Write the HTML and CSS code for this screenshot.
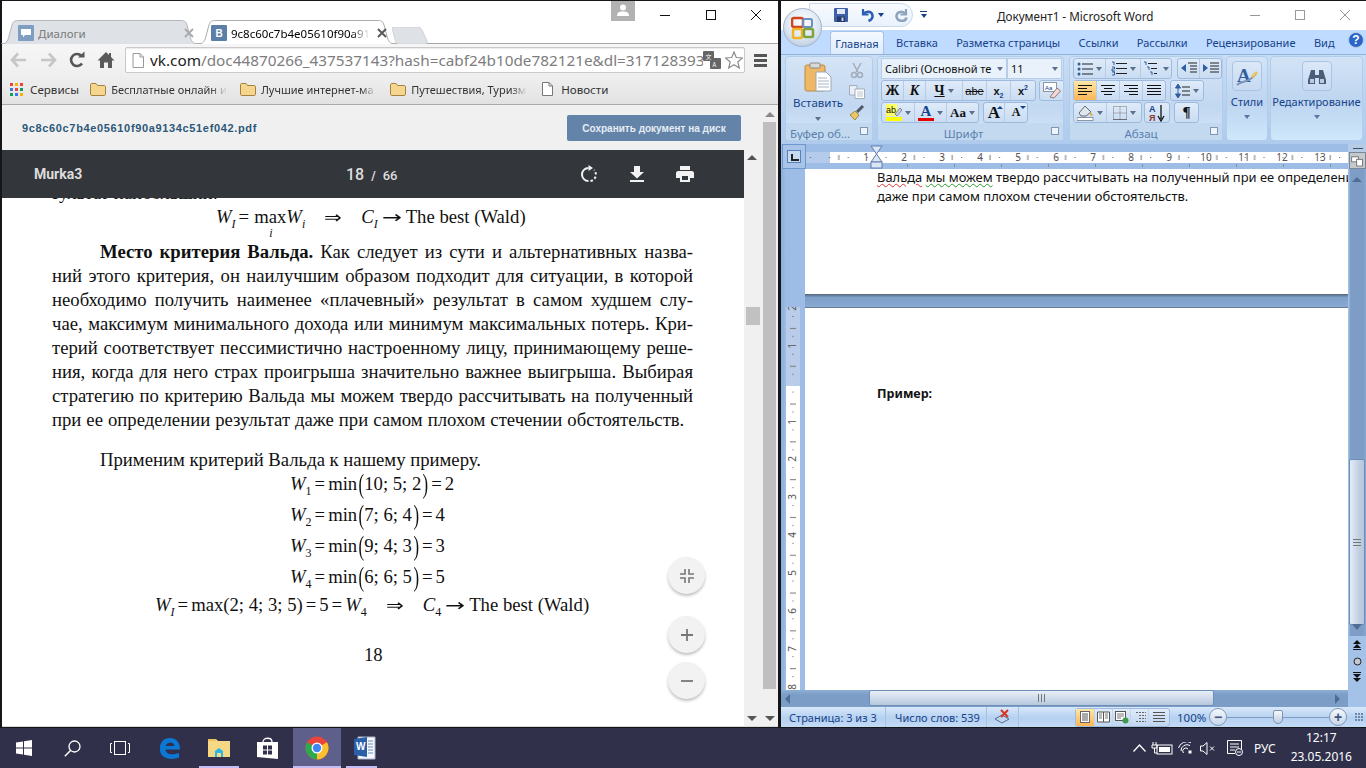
FILE: index.html
```html
<!DOCTYPE html>
<html lang="ru">
<head>
<meta charset="utf-8">
<title>Рабочий стол</title>
<link rel="stylesheet" href="styles.css">
</head>
<body>
<div class="desktop">
<div class="windows">

<section class="chrome">
  <div class="titlebar">
    <div class="tabs">
      <div class="tab tab-bg">
        <svg class="tabshape" viewBox="0 0 197 24" preserveAspectRatio="none"><path d="M0 24C5 24 7 21 8 16L11 5C12 1 14 .5 18 .5H179C183 .5 185 1 186 5L189 16C190 21 192 24 197 24" fill="#dee1e6" stroke="#b4b6ba"/></svg>
        <span class="fav fav-a"><svg width="10" height="10" viewBox="0 0 10 10"><path d="M0 1H10V7H4L2 9.500V7H0Z" fill="#fff"/></svg></span>
        <span class="tabtitle muted">Диалоги</span>
        <svg class="tabx" width="10" height="10" viewBox="0 0 10 10"><path d="M1 1L9 9M9 1L1 9" stroke="#a9abae" stroke-width="2"/></svg>
      </div>
      <div class="tab tab-on">
        <svg class="tabshape" viewBox="0 0 197 24" preserveAspectRatio="none"><path d="M0 24C5 24 7 21 8 16L11 5C12 1 14 .5 18 .5H179C183 .5 185 1 186 5L189 16C190 21 192 24 197 24" fill="#fff" stroke="#a9abae"/></svg>
        <span class="fav fav-b">B</span>
        <span class="tabtitle fade">9c8c60c7b4e05610f90a9134c51ef042.pdf</span>
        <svg class="tabx" width="10" height="10" viewBox="0 0 10 10"><path d="M1 1L9 9M9 1L1 9" stroke="#5a5a5a" stroke-width="2"/></svg>
      </div>
      <svg class="newtab" width="37" height="17" viewBox="0 0 37 17"><path d="M1 0H25C28 0 29 1 30 3L35 14C35.500 16 35 17 33 17H7C5 17 4 16 3.500 14L0 1Z" fill="#dee1e6" stroke="#d0d2d6"/></svg>
    </div>
    <div class="avatar"><svg width="12" height="12" viewBox="0 0 12 12"><circle cx="6" cy="3.500" r="3" fill="#fff"/><path d="M0 12C0 8 3 7.500 6 7.500S12 8 12 12Z" fill="#fff"/></svg></div>
    <div class="winbtns">
      <svg width="45" height="20" viewBox="0 0 45 20"><path d="M17 14.500H27" stroke="#111"/></svg>
      <svg width="45" height="20" viewBox="0 0 45 20"><rect x="18.500" y="9.500" width="9" height="9" fill="none" stroke="#111"/></svg>
      <svg width="45" height="20" viewBox="0 0 45 20"><path d="M18 9L28 19M28 9L18 19" stroke="#111"/></svg>
    </div>
  </div>

  <div class="toolbar">
    <svg class="nav" width="18" height="16" viewBox="0 0 18 16"><path d="M8 1.500L2 8L8 14.500M2 8H16" fill="none" stroke="#c6c6c6" stroke-width="2.600"/></svg>
    <svg class="nav" width="18" height="16" viewBox="0 0 18 16"><path d="M10 1.500L16 8L10 14.500M16 8H2" fill="none" stroke="#c6c6c6" stroke-width="2.600"/></svg>
    <svg class="nav" width="18" height="18" viewBox="0 0 18 18"><path d="M14 12.500A6 6 0 1 1 13.500 5" fill="none" stroke="#555" stroke-width="2.600"/><path d="M10 6.500H16.500V0.500Z" fill="#555"/></svg>
    <svg class="nav" width="18" height="18" viewBox="0 0 18 18"><path d="M9 1L0.500 9.500H3V17H7V11.500H11V17H15V9.500H17.500L14 6V2H12V4Z" fill="#5a5a5a"/></svg>
    <div class="urlbar">
      <svg width="12" height="15" viewBox="0 0 12 15"><path d="M1 .5H8L11.500 4V14.500H1Z" fill="#fff" stroke="#9a9a9a"/><path d="M8 .5V4H11.500" fill="none" stroke="#9a9a9a"/></svg>
      <span class="url"><b>vk.com</b>/doc44870266_437537143?hash=cabf24b10de782121e&amp;dl=317128393</span>
      <svg width="18" height="18" viewBox="0 0 18 18"><rect x="0" y="0" width="11" height="10" rx="1" fill="#666"/><rect x="7" y="7" width="11" height="11" rx="1" fill="#666"/><text x="2.500" y="8" class="tr">文</text><text x="9.500" y="16" class="tr">A</text></svg>
      <svg width="18" height="18" viewBox="0 0 18 18"><path d="M9 1L11.300 6.500L17.500 7L12.800 11L14.300 17L9 13.800L3.700 17L5.200 11L.5 7L6.700 6.500Z" fill="#fff" stroke="#8a8a8a" stroke-width="1.200"/></svg>
    </div>
    <div class="burger"><i></i><i></i><i></i></div>
  </div>

  <nav class="bookmarks">
    <span class="bm"><svg width="13" height="13" viewBox="0 0 13 13"><g><rect width="3" height="3" fill="#e8453c"/><rect x="5" width="3" height="3" fill="#f4b400"/><rect x="10" width="3" height="3" fill="#e8453c"/><rect y="5" width="3" height="3" fill="#3b78e7"/><rect x="5" y="5" width="3" height="3" fill="#e8453c"/><rect x="10" y="5" width="3" height="3" fill="#0f9d58"/><rect y="10" width="3" height="3" fill="#0f9d58"/><rect x="5" y="10" width="3" height="3" fill="#3b78e7"/><rect x="10" y="10" width="3" height="3" fill="#f4b400"/></g></svg>Сервисы</span>
    <span class="bm folder"><svg width="16" height="13" viewBox="0 0 16 13"><path d="M.5 2C.5 1 1 .5 2 .5H6L7.500 2.500H14C15 2.500 15.500 3 15.500 4V11C15.500 12 15 12.500 14 12.500H2C1 12.500 .5 12 .5 11Z" fill="#f6d58e" stroke="#a5813f"/></svg><span class="fade bmt">Бесплатные онлайн и</span></span>
    <span class="bm folder"><svg width="16" height="13" viewBox="0 0 16 13"><path d="M.5 2C.5 1 1 .5 2 .5H6L7.500 2.500H14C15 2.500 15.500 3 15.500 4V11C15.500 12 15 12.500 14 12.500H2C1 12.500 .5 12 .5 11Z" fill="#f6d58e" stroke="#a5813f"/></svg><span class="fade bmt">Лучшие интернет-ма</span></span>
    <span class="bm folder"><svg width="16" height="13" viewBox="0 0 16 13"><path d="M.5 2C.5 1 1 .5 2 .5H6L7.500 2.500H14C15 2.500 15.500 3 15.500 4V11C15.500 12 15 12.500 14 12.500H2C1 12.500 .5 12 .5 11Z" fill="#f6d58e" stroke="#a5813f"/></svg><span class="fade bmt">Путешествия, Туризм</span></span>
    <span class="bm doc"><svg width="11" height="14" viewBox="0 0 11 14"><path d="M.5 .5H7L10.500 4V13.500H.5Z" fill="#fff" stroke="#777"/><path d="M7 .5V4H10.500" fill="none" stroke="#777"/></svg>Новости</span>
  </nav>

  <div class="content">
    <div class="viewer">
      <header class="vkhead">
        <span class="fname">9c8c60c7b4e05610f90a9134c51ef042.pdf</span>
        <button class="save">Сохранить документ на диск</button>
      </header>
      <div class="pdfarea">
        <div class="pdfbar">
          <span class="owner">Murka3</span>
          <span class="pages"><b class="cur">18</b><i>/</i><b class="tot">66</b></span>
          <span class="pdficons">
            <svg width="18" height="18" viewBox="0 0 18 18"><path d="M8.500 3A6.500 6.500 0 0 0 8.500 16" fill="none" stroke="#f2f2f2" stroke-width="2"/><path d="M10.500 16A6.500 6.500 0 0 0 14 5" fill="none" stroke="#f2f2f2" stroke-width="2" stroke-dasharray="2.500 2"/><path d="M8.500 0L13 3L8.500 6Z" fill="#f2f2f2"/></svg>
            <svg width="14" height="16" viewBox="0 0 14 16"><path d="M4 0H10V6H14L7 12.500L0 6H4Z" fill="#f2f2f2"/><rect y="14" width="14" height="2" fill="#f2f2f2"/></svg>
            <svg width="18" height="16" viewBox="0 0 18 16"><path d="M4 0H14V4H4ZM2 5H16C17 5 18 6 18 7V12H14V16H4V12H0V7C0 6 1 5 2 5ZM6 10V14H12V10Z" fill="#f2f2f2" fill-rule="evenodd"/></svg>
          </span>
        </div>
        <article class="page">
          <p class="ln end">зультат наибольший:</p>
          <p class="fm f0"><i>W<sub>I</sub></i><span class="eq">=</span><span class="maxi">max<small>i</small></span><i>W<sub>i</sub></i><span class="sp">⇒</span><i>C<sub>I</sub></i><span class="arr">→</span>The best (Wald)</p>
          <p class="ln first"><b>Место критерия Вальда.</b> Как следует из сути и альтернативных назва-</p>
          <p class="ln">ний этого критерия, он наилучшим образом подходит для ситуации, в которой</p>
          <p class="ln">необходимо получить наименее «плачевный» результат в самом худшем слу-</p>
          <p class="ln">чае, максимум минимального дохода или минимум максимальных потерь. Кри-</p>
          <p class="ln">терий соответствует пессимистично настроенному лицу, принимающему реше-</p>
          <p class="ln">ния, когда для него страх проигрыша значительно важнее выигрыша. Выбирая</p>
          <p class="ln">стратегию по критерию Вальда мы можем твердо рассчитывать на полученный</p>
          <p class="ln end wide">при ее определении результат даже при самом плохом стечении обстоятельств.</p>
          <p class="ln end first lead">Применим критерий Вальда к нашему примеру.</p>
          <p class="fm fw"><i>W</i><sub>1</sub><span class="eq">=</span>min<span class="par">(</span>10; 5; 2<span class="par">)</span><span class="eq">=</span>2</p>
          <p class="fm fw"><i>W</i><sub>2</sub><span class="eq">=</span>min<span class="par">(</span>7; 6; 4<span class="par">)</span><span class="eq">=</span>4</p>
          <p class="fm fw"><i>W</i><sub>3</sub><span class="eq">=</span>min<span class="par">(</span>9; 4; 3<span class="par">)</span><span class="eq">=</span>3</p>
          <p class="fm fw"><i>W</i><sub>4</sub><span class="eq">=</span>min<span class="par">(</span>6; 6; 5<span class="par">)</span><span class="eq">=</span>5</p>
          <p class="fm flast"><i>W<sub>I</sub></i><span class="eq">=</span>max(2; 4; 3; 5)<span class="eq">=</span>5<span class="eq">=</span><i>W</i><sub>4</sub><span class="sp">⇒</span><i>C</i><sub>4</sub><span class="arr">→</span>The best (Wald)</p>
          <p class="pnum">18</p>
        </article>
        <div class="fabs">
          <button class="fab collapse"><svg width="14" height="14" viewBox="0 0 14 14"><path d="M5 0V5H0M9 0V5H14M5 14V9H0M9 14V9H14" fill="none" stroke="#777" stroke-width="1.600"/></svg></button>
          <button class="fab plus"><svg width="14" height="14" viewBox="0 0 14 14"><path d="M7 1V13M1 7H13" stroke="#777" stroke-width="1.800"/></svg></button>
          <button class="fab minus"><svg width="14" height="14" viewBox="0 0 14 14"><path d="M1 7H13" stroke="#777" stroke-width="1.800"/></svg></button>
        </div>
      </div>
    </div>
    <div class="scroll inner"><span class="up"></span><span class="thumb"></span><span class="dn"></span></div>
    <div class="scroll outer"><span class="up"></span><span class="thumb"></span><span class="dn"></span></div>
  </div>
</section>

<section class="word">
  <div class="wtitle">
    <div class="officebtn"><svg width="24" height="24" viewBox="0 0 24 24"><rect x="1" y="2" width="11" height="9" rx="2" fill="none" stroke="#d2451e" stroke-width="2.500"/><rect x="12" y="3" width="9" height="8" rx="1.500" fill="none" stroke="#6a8fc0" stroke-width="2"/><rect x="2" y="13" width="9" height="9" rx="1.500" fill="none" stroke="#f0b323" stroke-width="2.500"/><rect x="13" y="13" width="9" height="8" rx="1.500" fill="none" stroke="#7ea33c" stroke-width="2.500"/></svg></div>
    <div class="qat">
      <svg width="14" height="14" viewBox="0 0 14 14"><rect width="14" height="14" rx="1" fill="#3f5fa8"/><rect x="3" y="1" width="8" height="5" fill="#dfe8f6"/><rect x="3" y="8.500" width="8" height="5.500" fill="#26386c"/><rect x="7.500" y="9.500" width="2" height="3.500" fill="#c8d4ea"/></svg>
      <svg class="undo" width="14" height="14" viewBox="0 0 14 14"><path d="M3 1V6.500H8.500" fill="none" stroke="#2a5fb5" stroke-width="2.200"/><path d="M3.500 6C6 2.500 12 3 12.500 7.500C12.800 10 11 12 8.500 13" fill="none" stroke="#2a5fb5" stroke-width="2.500"/></svg>
      <span class="drop blue"></span>
      <svg class="redo" width="14" height="14" viewBox="0 0 14 14"><path d="M11 1V6.500H5.500" fill="none" stroke="#8ea4bc" stroke-width="2.200"/><path d="M10.500 6C8 2.500 2 3.500 1.500 7.500C1.200 10 3 13 7 13C9 13 11 12 11.500 9.500" fill="none" stroke="#8ea4bc" stroke-width="2.500"/></svg>
    </div>
    <span class="qatdrop"><i></i><span class="drop blue"></span></span>
    <span class="doctitle">Документ1 - Microsoft Word</span>
    <div class="wbtns">
      <svg width="45" height="20" viewBox="0 0 45 20"><path d="M20 15.500H30" stroke="#999"/></svg>
      <svg width="45" height="20" viewBox="0 0 45 20"><rect x="20.500" y="10.500" width="9" height="9" fill="none" stroke="#999"/></svg>
      <svg width="45" height="20" viewBox="0 0 45 20"><path d="M20 10L30 20M30 10L20 20" stroke="#999"/></svg>
    </div>
  </div>

  <div class="wtabs">
    <span class="wtab on">Главная</span>
    <span class="wtab">Вставка</span>
    <span class="wtab">Разметка страницы</span>
    <span class="wtab">Ссылки</span>
    <span class="wtab">Рассылки</span>
    <span class="wtab">Рецензирование</span>
    <span class="wtab">Вид</span>
    <span class="help">?</span>
  </div>

  <div class="ribbon">
    <div class="group g-clip">
      <div class="gbody clipbody">
        <div class="paste">
          <svg width="28" height="30" viewBox="0 0 28 30"><rect x="1" y="3" width="20" height="26" rx="2" fill="#eeb866" stroke="#b98a45"/><rect x="6" y="1" width="10" height="5" rx="1" fill="#d9d9d9" stroke="#8a8a8a"/><path d="M12 10H22L27 15V29H12Z" fill="#fff" stroke="#9aa8b8"/><path d="M14 16H23M14 19H25M14 22H25M14 25H25" stroke="#a8b4c4"/></svg>
          <span>Вставить</span><span class="drop"></span>
        </div>
        <div class="clipside">
          <svg width="16" height="16" viewBox="0 0 16 16"><path d="M4 0L9 9M12 0L7 9" stroke="#a3adba" stroke-width="1.500"/><circle cx="5" cy="12" r="2.500" fill="none" stroke="#a3adba" stroke-width="1.500"/><circle cx="11" cy="12" r="2.500" fill="none" stroke="#a3adba" stroke-width="1.500"/></svg>
          <svg width="16" height="14" viewBox="0 0 16 14"><path d="M.5 .5H8V10H.5Z" fill="#eaf0f8" stroke="#a3adba"/><path d="M6 4H15.500V13.500H6Z" fill="#fff" stroke="#a3adba"/><path d="M8 7H14M8 9H14M8 11H14" stroke="#b8c2ce"/></svg>
          <svg width="16" height="16" viewBox="0 0 16 16"><path d="M1 10L6 6L10 10L6 15Z" fill="#eac668" stroke="#a68a3c"/><path d="M8 7L14 1" stroke="#4f5866" stroke-width="3"/></svg>
        </div>
      </div>
      <div class="glabel gl-clip">Буфер об...<span class="launch"></span></div>
    </div>

    <div class="group g-font">
      <div class="gbody rows">
        <div class="rw">
          <span class="field ffam">Calibri (Основной те<span class="drop"></span></span>
          <span class="field fsize">11<span class="drop"></span></span>
        </div>
        <div class="rw">
          <span class="bgroup">
            <span class="rb w22 serif"><b>Ж</b></span><span class="rb w22 serif"><b><i>К</i></b></span><span class="rb w37 serif"><b class="ul">Ч</b><span class="drop"></span></span><span class="rb w24 sm"><s>abe</s></span><span class="rb w24 sm"><b>x<sub>2</sub></b></span><span class="rb w24 sm"><b>x<sup>2</sup></b></span>
          </span>
          <span class="bgroup ml3"><span class="rb w24"><svg width="18" height="17" viewBox="0 0 18 17"><rect x=".5" y=".5" width="13" height="9" fill="#fff" stroke="#8a96a5"/><text x="2" y="8" class="aa">Aa</text><path d="M7 15L14 6L17.500 9L11 16Z" fill="#f4d8d8" stroke="#8a7a7a"/></svg></span></span>
        </div>
        <div class="rw">
          <span class="bgroup">
            <span class="rb w33"><svg width="16" height="17" viewBox="0 0 16 17"><rect y="13" width="16" height="4" fill="#ffff00"/><rect width="11" height="12" fill="#ffff60"/><text x="0" y="9" class="hl">ab</text><path d="M9 10L14 4L16 6L11 12Z" fill="#c9d3df" stroke="#7a8694"/></svg><span class="drop"></span></span><span class="rb w32"><span class="fcolor">A</span><span class="drop"></span></span><span class="rb w31 serif"><b class="s13">Aa</b><span class="drop"></span></span>
          </span>
          <span class="bgroup ml4">
            <span class="rb w21 serif"><b class="s16">A</b><i class="tri-up"></i></span><span class="rb w22 serif"><b class="s12">A</b><i class="tri-dn"></i></span>
          </span>
        </div>
      </div>
      <div class="glabel gl-font">Шрифт<span class="launch"></span></div>
    </div>

    <div class="group g-par">
      <div class="gbody rows">
        <div class="rw">
          <span class="bgroup">
            <span class="rb w32"><svg width="16" height="14" viewBox="0 0 16 14"><path d="M5 2H16M5 7H16M5 12H16" stroke="#222" stroke-width="1.200"/><circle cx="2" cy="2" r="1.500" fill="#2f5f9f"/><circle cx="2" cy="7" r="1.500" fill="#2f5f9f"/><circle cx="2" cy="12" r="1.500" fill="#2f5f9f"/></svg><span class="drop"></span></span><span class="rb w35"><svg width="16" height="15" viewBox="0 0 16 15"><path d="M5 2.500H16M5 7.500H16M5 12.500H16" stroke="#222" stroke-width="1.200"/><path d="M1 1H3V4M1 6H3.500V8H1V10H4M1 11H3.500V14H1" fill="none" stroke="#2f5f9f"/></svg><span class="drop"></span></span><span class="rb w30"><svg width="17" height="15" viewBox="0 0 17 15"><path d="M5 2.500H14M8 7.500H14M11 12.500H14" stroke="#222" stroke-width="1.200"/><path d="M1 1H3V4M4 6H6V9M7 11H9V14" fill="none" stroke="#2f5f9f"/></svg><span class="drop"></span></span>
          </span>
          <span class="bgroup ml5">
            <span class="rb w22"><svg width="16" height="13" viewBox="0 0 16 13"><path d="M7 1H16M9 4H16M9 7H16M9 10H16" stroke="#222" stroke-width="1.200"/><path d="M0 6L5 2V10Z" fill="#2f5f9f"/></svg></span><span class="rb w21"><svg width="16" height="13" viewBox="0 0 16 13"><path d="M7 1H16M7 4H16M7 7H16M7 10H16" stroke="#222" stroke-width="1.200"/><path d="M5 6L0 2V10Z" fill="#2f5f9f"/></svg></span>
          </span>
        </div>
        <div class="rw">
          <span class="bgroup">
            <span class="rb w23 active"><svg width="14" height="11" viewBox="0 0 14 11"><path d="M0 .5H14M0 3.500H9M0 6.500H14M0 9.500H9" stroke="#111"/></svg></span><span class="rb w23"><svg width="14" height="11" viewBox="0 0 14 11"><path d="M0 .5H14M3 3.500H11M0 6.500H14M3 9.500H11" stroke="#111"/></svg></span><span class="rb w23"><svg width="14" height="11" viewBox="0 0 14 11"><path d="M0 .5H14M5 3.500H14M0 6.500H14M5 9.500H14" stroke="#111"/></svg></span><span class="rb w22"><svg width="14" height="11" viewBox="0 0 14 11"><path d="M0 .5H14M0 3.500H14M0 6.500H14M0 9.500H14" stroke="#111"/></svg></span>
          </span>
          <span class="bgroup ml4"><span class="rb w32"><svg width="15" height="16" viewBox="0 0 15 16"><path d="M3 1L.5 5H5.500ZM3 15L.5 11H5.500ZM3 4V12" fill="#2f5f9f" stroke="#2f5f9f"/><path d="M7 4H15M7 8H15M7 12H15" stroke="#222" stroke-width="1.200"/></svg><span class="drop"></span></span></span>
        </div>
        <div class="rw">
          <span class="bgroup">
            <span class="rb w33"><svg width="17" height="17" viewBox="0 0 17 17"><path d="M2 9L8 2L14 8L9 12H4Z" fill="#dfe6ee" stroke="#667"/><path d="M13 8C16 10 16 12 15 12S13 11 13 8Z" fill="#e5a23a"/><rect y="13.500" width="16" height="3" fill="#fff" stroke="#8a96a5"/></svg><span class="drop"></span></span><span class="rb w34"><svg width="14" height="14" viewBox="0 0 14 14"><path d="M.5 .5H13.500V13.500H.5ZM7 .5V13.500M.5 7H13.500" fill="none" stroke="#777" stroke-dasharray="1 1"/><path d="M.5 13.500H13.500" stroke="#333" stroke-dasharray="1 1"/></svg><span class="drop"></span></span>
          </span>
          <span class="bgroup ml2"><span class="rb w24 sortb"><svg width="16" height="18" viewBox="0 0 16 18"><text x="0" y="8" class="sa">А</text><text x="0" y="17" class="sy">Я</text><path d="M12 1V15M9 12L12 17L15 12" fill="none" stroke="#111" stroke-width="1.300"/></svg></span></span>
          <span class="bgroup ml4"><span class="rb w23 serif"><b class="s15">¶</b></span></span>
        </div>
      </div>
      <div class="glabel gl-par">Абзац<span class="launch"></span></div>
    </div>

    <div class="group g-sty">
      <div class="bigbtn"><svg width="22" height="22" viewBox="0 0 22 22"><text x="1" y="17" class="bigA">A</text><path d="M1 20C6 15 12 19 20 9" fill="none" stroke="#7d93b6" stroke-width="2"/><path d="M15 11L20 6L22 8L17 13Z" fill="#e9c45c"/></svg></div>
      <span class="biglabel">Стили</span><span class="drop"></span>
    </div>

    <div class="group g-edit">
      <div class="bigbtn"><svg width="18" height="17" viewBox="0 0 18 17"><path d="M3 2H7V7H11V2H15L18 12V16H11V10H7V16H0V12Z" fill="#4b5d78"/><rect x="2" y="11" width="4" height="4" fill="#b8cbe4"/><rect x="12" y="11" width="4" height="4" fill="#b8cbe4"/></svg></div>
      <span class="biglabel">Редактирование</span><span class="drop"></span>
    </div>
  </div>

  <div class="rulerrow">
    <div class="tabsel"><span></span></div>
    <svg class="hruler" width="543" height="25" viewBox="0 0 543 25">
      <defs>
        <pattern id="ticks" x="-23" y="8" width="37.800" height="12" patternUnits="userSpaceOnUse">
          <rect x="9.200" y="5" width="1" height="1" fill="#555"/>
          <rect x="18.500" y="3" width="1" height="5" fill="#777"/>
          <rect x="28" y="5" width="1" height="1" fill="#555"/>
        </pattern>
        <pattern id="tabstop" x="-16" y="20" width="47" height="3" patternUnits="userSpaceOnUse"><rect x="24" width="1" height="3" fill="#8a8f96"/></pattern>
      </defs>
      <rect x="1" y="8" width="24" height="11" fill="#b4cbeb"/>
      <rect x="25" y="8" width="518" height="11" fill="#fff"/>
      <rect x="1" y="8" width="542" height="11" fill="url(#ticks)"/>
      <rect x="90" y="20" width="453" height="3" fill="url(#tabstop)"/>
      <g class="rn">
        <text x="61" y="17">1</text><text x="99" y="17">2</text><text x="137" y="17">3</text><text x="175" y="17">4</text><text x="213" y="17">5</text><text x="251" y="17">6</text><text x="288" y="17">7</text><text x="326" y="17">8</text><text x="364" y="17">9</text><text x="401" y="17">10</text><text x="439" y="17">11</text><text x="477" y="17">12</text><text x="515" y="17">13</text>
      </g>
      <path d="M66 2H77L71.500 10Z M66 18L71.500 10L77 18Z" fill="#dbe6f5" stroke="#5d7fae"/>
      <rect x="66" y="18" width="11" height="6" fill="#dbe6f5" stroke="#5d7fae"/>
    </svg>
    <div class="viewruler"><i></i><span><svg width="15" height="14" viewBox="0 0 18 14"><rect x="2" y="2" width="8" height="6" fill="#fff" stroke="#666"/><rect x="8" y="5" width="7" height="8" fill="#fff" stroke="#666"/></svg></span></div>
  </div>

  <div class="docarea">
    <div class="leftrail">
      <svg class="vruler" width="14" height="383" viewBox="0 -1 14 383">
        <defs><pattern id="vt" x="0" y="2" width="14" height="37.800" patternUnits="userSpaceOnUse"><rect x="6.500" y="6" width="1" height="1" fill="#555"/><rect x="4" y="18" width="6" height="1" fill="#777"/><rect x="6.500" y="26" width="1" height="1" fill="#555"/></pattern></defs>
        <rect y="-1" width="14" height="79" fill="#b9cdea"/><rect y="78" width="14" height="304" fill="#fff"/><rect y="-1" width="14" height="383" fill="url(#vt)"/>
        <g class="rv">
          <text transform="translate(10 0) rotate(-90)">2</text><text transform="translate(10 38) rotate(-90)">1</text><text transform="translate(10 114) rotate(-90)">1</text><text transform="translate(10 151) rotate(-90)">2</text><text transform="translate(10 189) rotate(-90)">3</text><text transform="translate(10 227) rotate(-90)">4</text><text transform="translate(10 265) rotate(-90)">5</text><text transform="translate(10 303) rotate(-90)">6</text><text transform="translate(10 341) rotate(-90)">7</text><text transform="translate(10 379) rotate(-90)">8</text>
        </g>
      </svg>
    </div>
    <div class="docpages">
      <div class="docpage p1">
        <p class="dl"><span class="wavyr">Вальда</span> <span class="wavyg">мы можем</span> твердо рассчитывать на полученный при ее определении</p>
        <p class="dl">даже при самом плохом стечении обстоятельств.</p>
      </div>
      <div class="pagegap"></div>
      <div class="docpage p2"><p class="dl"><b>Пример:</b></p></div>
    </div>
    <div class="vscroll">
      <div class="vtrack"><span class="vup"></span><span class="vthumb"><i></i></span><span class="vdn"></span></div>
      <div class="vnav">
        <svg width="8" height="10" viewBox="0 0 8 10"><path d="M4 0L8 4H0ZM4 4L8 8H0ZM0 9H8V10H0Z" fill="#111"/></svg>
        <svg width="9" height="9" viewBox="0 0 9 9"><circle cx="4.500" cy="4.500" r="3.500" fill="#c4c8cc" stroke="#222"/></svg>
        <svg width="8" height="10" viewBox="0 0 8 10"><path d="M0 0H8V1H0ZM0 2H8L4 6ZM0 6H8L4 10Z" fill="#111"/></svg>
      </div>
    </div>
  </div>

  <div class="hscrollrow">
    <div class="htrack"><span class="hl-arrow"></span><span class="hthumb"><i></i></span><span class="hr-arrow"></span></div>
    <div class="hcorner"></div>
  </div>

  <footer class="status">
    <span class="st s1">Страница: 3 из 3</span>
    <span class="st s2">Число слов: 539</span>
    <span class="st s3"><svg width="17" height="16" viewBox="0 0 17 16"><path d="M1 10L8 6L15 10L8 14Z" fill="#c2d4ea" stroke="#4d6f9c"/><path d="M7 1L14 8M14 1L7 8" stroke="#d8341f" stroke-width="2"/></svg></span>
    <span class="st s4"></span>
    <span class="views">
      <span class="vb active"><svg width="12" height="12" viewBox="0 0 12 12"><rect x="1.500" y=".5" width="9" height="11" fill="#fff" stroke="#666"/><path d="M3 3H9M3 5H9M3 7H9M3 9H9" stroke="#555"/></svg></span>
      <span class="vb"><svg width="13" height="12" viewBox="0 0 13 12"><path d="M.5 1H6.500V11H.5ZM6.500 1H12.500V11H6.500Z" fill="#fff" stroke="#555"/><path d="M2 3H5M2 5H5M2 7H5M8 3H11M8 5H11M8 7H11" stroke="#777"/></svg></span>
      <span class="vb"><svg width="14" height="13" viewBox="0 0 14 13"><rect x=".5" y=".5" width="10" height="9" fill="#fff" stroke="#555"/><path d="M2 3H9M2 5H9M2 7H6" stroke="#777"/><circle cx="10.500" cy="9.500" r="3" fill="#3f9a4a"/></svg></span>
      <span class="vb"><svg width="12" height="11" viewBox="0 0 12 11"><path d="M2 .5H12M5 3.500H12M5 6.500H12M2 9.500H12" stroke="#666" stroke-dasharray="2 1"/></svg></span>
      <span class="vb last"><svg width="12" height="11" viewBox="0 0 12 11"><path d="M0 .5H12M0 3.500H12M0 6.500H12M0 9.500H12" stroke="#555"/></svg></span>
    </span>
    <span class="zoomval">100%</span>
    <span class="zbtn">−</span>
    <span class="slider"><i></i></span>
    <span class="zbtn">+</span>
    <span class="grip"></span>
  </footer>
</section>
</div>

<footer class="taskbar">
  <span class="tb w48"><svg width="16" height="16" viewBox="0 0 16 16"><path d="M0 2.400L7 1.400V7.500H0ZM8 1.300L16 0V7.500H8ZM0 8.500H7V14.600L0 13.600ZM8 8.500H16V16L8 14.800Z" fill="#fff"/></svg></span>
  <span class="tb w48"><svg width="17" height="17" viewBox="0 0 17 17"><circle cx="10.500" cy="6.500" r="5.500" fill="none" stroke="#fff" stroke-width="1.300"/><path d="M6.500 10.500L.8 16.200" stroke="#fff" stroke-width="1.500"/></svg></span>
  <span class="tb w48"><svg width="20" height="14" viewBox="0 0 20 14"><rect x="4.500" y=".5" width="11" height="13" fill="none" stroke="#fff"/><path d="M2 2.500H.5V11.500H2M18 2.500H19.500V11.500H18" fill="none" stroke="#fff"/></svg></span>
  <span class="tb w51"><svg width="21" height="21" viewBox="0 0 21 21"><path d="M1 10C1 4 5 0 11 0C17 0 21 4 21 11.500H6.500C7 15.500 11 18 20 15V19.500C11 23 0 20 1 10ZM6.500 8H15.500C15 4 9 3 6.500 8Z" fill="#0c78d6" fill-rule="evenodd"/></svg></span>
  <span class="tb w48 under"><svg width="22" height="18" viewBox="0 0 22 18"><path d="M0 0H8L10 2H22V18H0Z" fill="#f5d884"/><rect y="0" width="8" height="2" fill="#e8c35e"/><path d="M7 18V12L11 9L15 12V18H13V14H9V18Z" fill="#2bb6e8"/></svg></span>
  <span class="tb w48"><svg width="21" height="22" viewBox="0 0 21 22"><path d="M0 5H21V22L0 20Z" fill="#fff"/><path d="M6 5C6 0 15 0 15 5" fill="none" stroke="#fff" stroke-width="1.300"/><path d="M6 8.500L10 8.500V12.500H6ZM11 8.500H15V12.500H11ZM6 13.500H10V17.500H6ZM11 13.500H15V17.500H11Z" fill="#31314d"/></svg></span>
  <span class="tb w48 chromeapp under"><svg width="24" height="24" viewBox="0 0 24 24"><circle cx="12" cy="12" r="11.500" fill="#e8453c"/><path d="M12 12L22 6.300A11.500 11.500 0 0 1 12 23.500Z" fill="#fbc02d"/><path d="M12 12L12 23.500A11.500 11.500 0 0 1 2 6.300Z" fill="#2da94f"/><circle cx="12" cy="12" r="5.500" fill="#fff"/><circle cx="12" cy="12" r="4.200" fill="#4285f4"/></svg></span>
  <span class="tb w48 under wordapp"><svg width="24" height="24" viewBox="0 0 24 24"><path d="M5 1H22V23H5Z" fill="#f4f7fb" stroke="#a9b6c9"/><path d="M1 3L14 1V21L1 19Z" fill="#2b5fa8"/><text x="3" y="14" class="wlogo">W</text><path d="M15 5H20M15 8H20M15 11H20M15 14H20M15 17H20" stroke="#6f8fbb"/></svg></span>
  <div class="tray">
    <svg width="13" height="8" viewBox="0 0 13 8"><path d="M.5 7.500L6.500 1L12.500 7.500" fill="none" stroke="#fff" stroke-width="1.300"/></svg>
    <svg class="t-bat" width="22" height="13" viewBox="0 0 22 13"><rect x="6" y="3" width="15" height="9" fill="none" stroke="#fff"/><rect x="8" y="5" width="11" height="5" fill="#fff"/><path d="M2 0V3M5 0V3M1 3H6V6H1ZM3.500 6V11H6" fill="none" stroke="#fff"/></svg>
    <svg class="t-wifi" width="14" height="13" viewBox="0 0 14 13"><path d="M.5 6A9 9 0 0 1 13 .5M3 9A6 6 0 0 1 12 3.500M5.500 11A3 3 0 0 1 10 7" fill="none" stroke="#fff"/><rect x="10.500" y="8.500" width="3" height="3" fill="#fff"/></svg>
    <svg class="t-vol" width="15" height="13" viewBox="0 0 15 13"><path d="M.5 4H3L7 .5V12.500L3 9H.5Z" fill="none" stroke="#fff"/><path d="M10 4.500L14 8.500M14 4.500L10 8.500" stroke="#fff"/></svg>
    <svg class="t-note" width="16" height="16" viewBox="0 0 16 16"><path d="M.5 .5H14.500V10M8 13.500H.5V.5" fill="none" stroke="#fff"/><path d="M3 4H12M3 7H12M3 10H8" stroke="#fff"/><circle cx="12" cy="12" r="3.500" fill="#31314d" stroke="#fff"/><path d="M10 12H14" stroke="#fff"/></svg>
    <span class="lang">РУС</span>
    <span class="clock"><span>12:17</span><span>23.05.2016</span></span>
  </div>
</footer>
</div>
</body>
</html>
```
FILE: styles.css
```css
*{box-sizing:border-box}
html,body{margin:0;padding:0;width:1366px;height:768px;overflow:hidden;background:#111}
p{margin:0}
button{font:inherit;border:0;padding:0}
.desktop{width:1366px;height:768px;display:flex;flex-direction:column;background:#1b1b22}
.windows{height:728px;display:flex;padding:1px 0 0 2px;background:#15151c}

/* chrome */
.chrome{width:776px;height:726px;display:flex;flex-direction:column;background:#fff;font-family:"Noto Sans","Open Sans",sans-serif;border-bottom:1px solid #d8d8d8}
.titlebar{height:43px;display:flex;background:#fff;border-bottom:1px solid #a8a8a8}
.tabs{display:flex;align-items:flex-end;margin-top:19px;height:24px;position:relative}
.tab{position:relative;width:197px;height:24px;display:flex;align-items:center;padding:2px 4px 0 17px}
.tab-bg{margin-left:-1px}
.tab-on{padding:2px 8px 0 13px;z-index:1}
.tabshape{position:absolute;left:0;top:0;width:100%;height:100%}
.fav,.tabtitle,.tabx{position:relative}
.fav{width:16px;height:16px;flex:none;display:flex;align-items:center;justify-content:center;border-radius:1px}
.fav-a{background:#7f9fc2}
.fav-b{background:#5c7fa8;color:#fff;font:bold 10px "Liberation Sans",sans-serif}
.tabtitle{flex:1;min-width:0;white-space:nowrap;overflow:hidden;font-size:11.500px;margin-left:4px}
.muted{color:#7b7b7b}
.fade{-webkit-mask-image:linear-gradient(90deg,#000 86%,transparent);mask-image:linear-gradient(90deg,#000 86%,transparent)}
.tabx{flex:none;margin-left:7px}
.newtab{position:relative;margin:0 0 0 -3px;flex:none;z-index:0}
.avatar{width:24px;height:20px;background:#b2b2b2;display:flex;align-items:center;justify-content:center;margin-left:182px}
.avatar svg{margin-bottom:3px}
.winbtns{display:flex;margin-left:8px;height:20px}
.toolbar{height:32px;display:flex;align-items:center;padding:0 0 0 8px;background:linear-gradient(#f6f6f6,#efefef);gap:0}
.nav{flex:none;margin-right:11px}
.urlbar{width:620px;height:26px;margin-left:-1px;background:#fff;border:1px solid #c9c9c9;border-radius:2px;display:flex;align-items:center;padding:0 1px 0 6px;box-shadow:inset 0 1px 1px #ececec}
.url{flex:1;min-width:0;overflow:hidden;white-space:nowrap;font-size:15.300px;color:#7d7d7d;margin-left:6px}
.url b{font-weight:400;color:#222}
.urlbar svg:nth-of-type(2){margin:0 4px 0 0}
.burger{margin-left:9px;width:13px;display:flex;flex-direction:column;gap:2px}
.burger i{height:3px;background:#555;display:block}
.tr{font:6px "Noto Sans CJK SC",sans-serif;fill:#fff}
.bookmarks{height:29px;display:flex;align-items:center;padding:0 0 2px 8px;background:linear-gradient(#efefef,#e2e2e2);border-bottom:1px solid #ababab;font-size:11.600px;color:#333}
.bm{display:flex;align-items:center;gap:7px;white-space:nowrap}
.bmt{display:block;width:116px;overflow:hidden;font-size:11px}
.folder{margin-left:13px;gap:5px}
.bm:nth-child(2){margin-left:11px}
.doc{margin-left:15px;gap:8px}
.content{flex:1;min-height:0;display:flex;background:#f0f0f0}
.viewer{width:742px;display:flex;flex-direction:column;background:#fff}
.vkhead{height:45px;display:flex;align-items:center;justify-content:space-between;padding:0 3px 0 20px;background:#f0f0f0}
.fname{font:bold 11px "Liberation Sans",sans-serif;color:#2b587a;letter-spacing:.65px}
.save{width:174px;height:26px;margin-top:1px;background:#6383a8;color:#e6edf4;border-radius:2px;font:bold 10px "Liberation Sans",sans-serif}
.pdfarea{position:relative;flex:1;min-height:0;overflow:hidden;background:#fff}
.pdfbar{position:absolute;left:0;top:0;width:100%;height:48px;background:#33363a;color:#ddd;display:flex;align-items:center;z-index:2;padding-left:32px}
.owner{font:bold 14px "Roboto",sans-serif;width:312px}
.pages{display:flex;align-items:baseline;gap:7px;color:#ddd;font-family:"Roboto",sans-serif;width:208px}
.pages i{font:bold 12px "Roboto",sans-serif}
.pages b{font-weight:500}
.cur{font-size:16px}.tot{font-size:13px}
.pdficons{display:flex;align-items:center;gap:32px;margin-left:26px}
.page{padding:31px 0 0 50px;width:692px;font:18.700px/24px "Liberation Serif",serif;color:#111}
.ln{width:641px;height:24px;white-space:nowrap;text-align:justify;text-align-last:justify}
.ln.end{text-align-last:left}
.wide{word-spacing:.35px}
.first{padding-left:48px}
.lead{margin-top:16px;height:20px}
.fm{height:31px;line-height:31px;white-space:pre;color:#111}
.fm sub{font-size:12px;line-height:0}
.fm i{font-style:italic}
.eq{margin:0 3px}
.sp{display:inline-block;width:20px;margin:0 18px 0 18px;text-align:center;font-family:"DejaVu Sans",sans-serif;font-size:17px;line-height:1;transform:scaleX(1.25)}
.arr{display:inline-block;width:22px;margin:0 3px 0 3px;text-align:center;font-family:"DejaVu Sans",sans-serif;font-size:17px;line-height:1;transform:scaleX(1.4)}
.f0{height:24px;line-height:24px;margin:0 0 11px 164px}
.maxi{position:relative;margin-left:2px}
.maxi small{position:absolute;left:15px;top:20px;font:italic 12px "Liberation Serif",serif}
.fw{padding-left:238px}
.par{display:inline-block;width:7px;text-align:center;font-size:28px;line-height:0;vertical-align:-3px;transform:scaleX(.6)}
.flast{height:24px;line-height:24px;padding-left:103px;margin-top:1px}
.pnum{margin:26px 0 0 312px;height:24px}
.fabs{position:absolute;left:666px;top:0;width:37px;height:100%}
.fab{position:absolute;left:0;width:37px;height:37px;border-radius:50%;background:#f2f2f2;box-shadow:0 2px 3px rgba(0,0,0,.25);display:flex;align-items:center;justify-content:center}
.collapse{top:407px}.plus{top:466px}.minus{top:512px}
.scroll{position:relative;flex:none;background:#f0f0f0}
.scroll.inner{width:19px;margin-top:45px}
.scroll.outer{width:15px;background:#f0f0f0}
.up,.dn{position:absolute;margin-left:-5px;width:0;height:0;border:5px solid transparent}
.up{border-bottom-color:#888;border-top:0}
.dn{border-top-color:#555;border-bottom:0;bottom:5px}
.inner .up{top:5px;left:8px;border-bottom-color:#555}
.inner .thumb{position:absolute;left:2px;top:157px;width:14px;height:18px;background:#c1c1c1}
.inner .dn{left:8px}
.outer .up{top:7px;left:7px}
.outer .dn{left:7px}
.outer .thumb{position:absolute;left:0;top:17px;width:13px;height:567px;background:#bfbfbf}

/* word */
.word{width:585px;height:726px;margin-left:3px;display:flex;flex-direction:column;font-family:"Noto Sans",sans-serif;font-size:11px;color:#15428b;background:#bfdbff}
.wtitle{position:relative;height:29px;background:#fff;display:flex;align-items:center}
.officebtn{position:absolute;left:2px;top:7px;width:39px;height:39px;border-radius:50%;background:radial-gradient(circle at 50% 35%,#fff,#dbe6f2 55%,#a9bdd6);border:1px solid #a4b2c6;display:flex;align-items:center;justify-content:center;z-index:3}
.qat{margin-left:28px;width:104px;height:24px;margin-top:-2px;border:1px solid #c9d9ee;border-radius:0 12px 12px 0;background:linear-gradient(#f8fbff,#e9f1fb);display:flex;align-items:center;padding-left:24px}
.undo{margin-left:12px}
.redo{margin-left:11px}
.drop{display:inline-block;width:0;height:0;border:3.500px solid transparent;border-top:4px solid #5d6f8a;border-bottom:0}
.drop.blue{border-top-color:#15428b;margin-left:4px}
.qatdrop{display:flex;flex-direction:column;align-items:center;margin-left:7px;gap:2px;width:7px;margin-top:-3px}
.qatdrop i{display:block;width:7px;height:1px;background:#15428b}
.qatdrop .drop{margin:0}
.doctitle{margin-left:70px;font-size:11.700px;color:#222;white-space:nowrap}
.wbtns{display:flex;margin-left:auto;margin-right:1px;margin-top:-11px;height:20px}
.wtabs{height:24px;display:flex;align-items:flex-end;padding-left:49px;background:#bfdbff;font-size:11px;color:#15428b;position:relative}
.wtab{height:23px;margin-right:18.400px;display:flex;align-items:center;white-space:nowrap}
.wtab.on{width:54px;justify-content:center;background:linear-gradient(#f4f9ff,#dcebfb);border:1px solid #a9c3e6;border-bottom:0;border-radius:3px 3px 0 0;margin-right:12px}
.help{position:absolute;right:2px;top:2px;width:16px;height:16px;border-radius:50%;background:#2a66c9;border:1px solid #bcd;color:#fff;font:bold 12px/14px "Liberation Sans",sans-serif;text-align:center}
.ribbon{height:90px;display:flex;padding:1px 3px 0 4px;background:linear-gradient(#c9ddf5,#b7d0ef 60%,#aecbee);border-top:1px solid #8fb2dc}
.group{height:85px;border:1px solid #b2cdea;border-radius:4px;background:linear-gradient(#d5e4f6,#c2d8f1 60%,#d4e8fa);display:flex;flex-direction:column;flex:none;position:relative;overflow:hidden}
.gbody{flex:1}
.glabel{height:17px;padding-top:3px;display:flex;align-items:center;justify-content:center;background:#c2d9f0;color:#5b7fae;font-size:11.500px;position:relative}
.gl-clip{justify-content:flex-start;padding-left:4px}
.gl-font{padding-right:14px}
.gl-par{padding-right:10px}
.launch{position:absolute;right:4px;top:4px;width:8px;height:8px;border:1px solid #7f96b2;background:#eef4fb}
.g-clip{width:88px}
.clipbody{display:flex;padding:4px 0 0 5px}
.paste{width:54px;display:flex;flex-direction:column;align-items:center;font-size:11.500px}
.paste svg{margin-top:1px}
.paste span:nth-of-type(1){margin-top:3px}
.paste .drop{margin-top:7px}
.clipside{display:flex;flex-direction:column;align-items:center;gap:6px;margin-left:4px;padding-top:2px}
.g-font{width:187px;margin-left:4px}
.g-par{width:154px;margin-left:5px}
.rows{display:flex;flex-direction:column;gap:1px;padding:1px 0 0 3px}
.rw{display:flex;height:21px;align-items:stretch}
.field{background:#e9f1fb;border:1px solid #b5cde8;color:#111;display:flex;align-items:center;justify-content:space-between;font-size:11px;padding:0 3px;white-space:nowrap}
.ffam{width:126px}
.fsize{width:55px}
.bgroup{display:flex;border:1px solid #9ebbdd;border-radius:3px;background:linear-gradient(#dfebf9,#c9dcf2)}
.ml2{margin-left:2px}.ml3{margin-left:3px}.ml4{margin-left:4px}.ml5{margin-left:5px}
.rb{display:flex;align-items:center;justify-content:center;gap:3px;color:#111;border-right:1px solid #b5cbe6;position:relative;font-size:12px}
.rb:last-child{border-right:0}
.serif{font-family:"Liberation Serif",serif;font-size:14px}
.sm{font:11px "Liberation Sans",sans-serif}
.sm sub,.sm sup{font-size:7px;line-height:0;color:#15428b}
.ul{text-decoration:underline}
.w21{width:21px}.w22{width:22px}.w23{width:23px}.w24{width:24px}.w30{width:30px}.w31{width:31px}.w32{width:32px}.w33{width:33px}.w34{width:34px}.w35{width:35px}.w37{width:37px}
.fcolor{font:bold 15px/14px "Liberation Serif",serif;color:#15428b;border-bottom:3px solid #e80000;width:16px;text-align:center}
.s12{font-size:12px}.s13{font-size:13px}.s15{font-size:15px}.s16{font-size:17px}
.tri-up,.tri-dn{position:absolute;right:1px;top:3px;width:0;height:0;border:3px solid transparent}
.tri-up{border-bottom:3px solid #15428b;border-top:0}
.tri-dn{border-top:3px solid #15428b;border-bottom:0}
.active{background:linear-gradient(#fde7a8,#fbb556)}
.aa{font:6px "Liberation Sans",sans-serif;fill:#15428b}
.hl{font:9px "Liberation Sans",sans-serif;fill:#111}
.sa{font:bold 9px "Liberation Sans",sans-serif;fill:#15428b}
.sy{font:bold 9px "Liberation Sans",sans-serif;fill:#8a3a2a}
.bigA{font:bold 19px "Liberation Serif",serif;fill:#2f5f9f}
.wlogo{font:bold 10px "Liberation Sans",sans-serif;fill:#fff}
.g-sty{width:42px;align-items:center;margin-left:3px}
.g-edit{width:93px;align-items:center;margin-left:2px}
.g-sty,.g-edit{background:linear-gradient(#d3e3f6,#bdd5f0 55%,#cfe7fa)}
.bigbtn{width:30px;height:30px;margin-top:4px;border:1px solid #a9c5e6;border-radius:4px;background:linear-gradient(#dbe8f8,#c6daf2);display:flex;align-items:center;justify-content:center;flex:none}
.biglabel{margin-top:3px;font-size:11px;white-space:nowrap}
.group > .drop{margin-top:6px}
.g-sty .drop,.g-edit .drop{border-top-color:#5877a3}
.rulerrow{height:25px;display:flex;background:#9dbce6;position:relative}
.tabsel{width:24px;height:25px;margin-left:1px;border:1px solid #6f97cb;background:#a9c4e9;display:flex;align-items:flex-start;padding:5px 0 0 4px;flex:none}
.tabsel span{display:flex;width:14px;height:13px;border:1px solid #5a82b8;background:#c6daf2;padding:3px 0 0 3px}
.tabsel span::before{content:"";display:block;width:6px;height:5px;border-left:2px solid #222;border-bottom:2px solid #222}
.hruler{flex:none;margin-left:-1px;display:block;position:relative;z-index:1}
.rn text{font:10px "Noto Sans",sans-serif;fill:#555;text-anchor:middle}
.rv text{font:10px "Noto Sans",sans-serif;fill:#555;text-anchor:middle}
.viewruler{flex:1;background:#b6cbe6}
.viewruler i{display:block;width:10px;height:1px;background:#39536f;margin:4px auto 3px}
.viewruler span{display:flex;justify-content:center;background:#c6c9cc;border:1px solid #77889a;height:17px;margin:0 1px;align-items:center}
.docarea{height:521px;display:flex}
.leftrail{width:24px;padding:138px 0 0 5px;background:linear-gradient(90deg,#8caed9,#9dbce6 20%,#9dbce6);overflow:hidden}
.vruler{display:block}
.docpages{width:543px;display:flex;flex-direction:column;background:#fff;overflow:hidden}
.docpage{padding-left:72px;color:#111;font:12.930px/21px "Noto Sans",sans-serif;white-space:nowrap}
.p1{height:125px}
.p2{flex:1;padding-top:76px;font-size:12.500px}
.dl{height:27px;line-height:20px}
.p1 .dl:first-child{height:17px;line-height:16px}
.wavyr{text-decoration:underline wavy #d33;text-decoration-thickness:1px}
.wavyg{text-decoration:underline wavy #2a9a2a;text-decoration-thickness:1px}
.pagegap{height:14px;flex:none;background:linear-gradient(#55657c,#7fa0c8 25%,#87a8d0 90%,#5a6578)}
.vscroll{width:18px;display:flex;flex-direction:column;background:#a4c2e8}
.vtrack{height:467px;position:relative;background:linear-gradient(90deg,#a9c6ea,#7d9dc7 15%,#7d9dc7 85%,#88a8d0)}
.vup,.vdn{position:absolute;left:4px;width:0;height:0;border:5px solid transparent}
.vup{top:8px;border-top:0;border-bottom:5px solid #4f6d95}
.vdn{bottom:6px;border-bottom:0;border-top:6px solid #4f6d95}
.vthumb{position:absolute;left:1px;top:290px;width:16px;height:166px;border:1px solid #6e8fb8;border-radius:2px;background:linear-gradient(90deg,#e4ecf6,#c3d1e4 60%,#b5c6dc);display:flex;align-items:center;justify-content:center}
.vthumb i{width:8px;height:7px;border-top:1px solid #777;border-bottom:1px solid #777;background:linear-gradient(#777,#777) center/100% 1px no-repeat}
.vnav{flex:1;display:flex;flex-direction:column;align-items:center;gap:6.500px;padding-top:4px}
.hscrollrow{height:17px;display:flex}
.htrack{width:567px;position:relative;background:linear-gradient(#8eaed4,#7b9dc6 30%,#7b9dc6)}
.hcorner{flex:1;background:#a4c2e8}
.hl-arrow,.hr-arrow{position:absolute;top:4px;width:0;height:0;border:5px solid transparent}
.hl-arrow{left:4px;border-left:0;border-right:5px solid #4f6d95}
.hr-arrow{left:554px;border-right:0;border-left:5px solid #4f6d95}
.hthumb{position:absolute;left:88px;top:0;width:345px;height:16px;border:1px solid #6e8fb8;border-radius:2px;background:linear-gradient(#e8eff7,#c6d4e6 70%,#b5c6dc);display:flex;align-items:center;justify-content:center}
.hthumb i{width:7px;height:8px;border-left:1px solid #777;border-right:1px solid #777;background:linear-gradient(#777,#777) center/1px 100% no-repeat}
.status{flex:1;min-height:0;display:flex;align-items:center;background:linear-gradient(#d8e8fa,#b5d0f0 55%,#c4dbf6);font-size:11px;color:#15428b;white-space:nowrap}
.st{height:100%;display:flex;align-items:center;border-right:1px solid #a6c1e2}
.s1{width:105px;padding-left:8px}
.s2{width:101px;padding-left:9px}
.s3{width:32px;justify-content:center}
.s4{width:48px;border-right:0}
.views{display:flex;height:19px;margin-left:8px;border:1px solid #9ebbdd;border-radius:3px;background:linear-gradient(#dfebf9,#c0d6f0)}
.vb{width:18px;display:flex;align-items:center;justify-content:center;border-right:1px solid #c2d5ec}
.vb.active{width:19px;background:linear-gradient(#fde7a8,#fbb556)}
.vb.last{border-right:0;width:20px}
.zoomval{margin-left:7px;width:30px;font-size:11.500px}
.zbtn{width:18px;height:18px;margin-left:2px;border-radius:50%;border:1px solid #8099b8;background:linear-gradient(#f4f8fc,#c6d6ea);color:#3c5678;display:flex;align-items:center;justify-content:center;font:bold 14px/1 "Liberation Sans",sans-serif;flex:none}
.slider{width:102px;height:1px;background:#7e9cc2;position:relative}
.slider i{position:absolute;left:46px;top:-7px;width:10px;height:14px;background:linear-gradient(#f5f8fc,#bccde2);border:1px solid #7e93ae;border-radius:2px 2px 5px 5px}
.slider + .zbtn{margin-left:0}
.grip{width:9px;height:9px;margin-left:8px;background:radial-gradient(circle at 1px 1px,#6d89ad 1px,transparent 1.200px) 0 0/3px 3px}

/* taskbar */
.taskbar{height:40px;display:flex;align-items:center;background:#30304b;color:#fff;font-family:"Noto Sans",sans-serif}
.tb{height:40px;display:flex;align-items:center;justify-content:center;position:relative;flex:none}
.w48{width:48px}.w51{width:51px}
.under::after{content:"";position:absolute;left:4px;right:4px;bottom:0;height:2px;background:#c4bcf4}
.chromeapp{background:#5f5f8c;margin-left:2px}
.chromeapp::after{left:0;right:0}
.wordapp::after{right:12px;left:5px}
.tray{margin-left:auto;height:100%;display:flex;align-items:center;padding-right:14px;font-size:12px}
.t-bat{margin-left:5px}
.t-wifi{margin-left:5px}
.t-vol{margin-left:8px}
.t-note{margin-left:12px}
.lang{margin-left:11px}
.clock{display:flex;flex-direction:column;align-items:center;margin:-2px 0 0 15px;line-height:19px;font-size:12px}
```
